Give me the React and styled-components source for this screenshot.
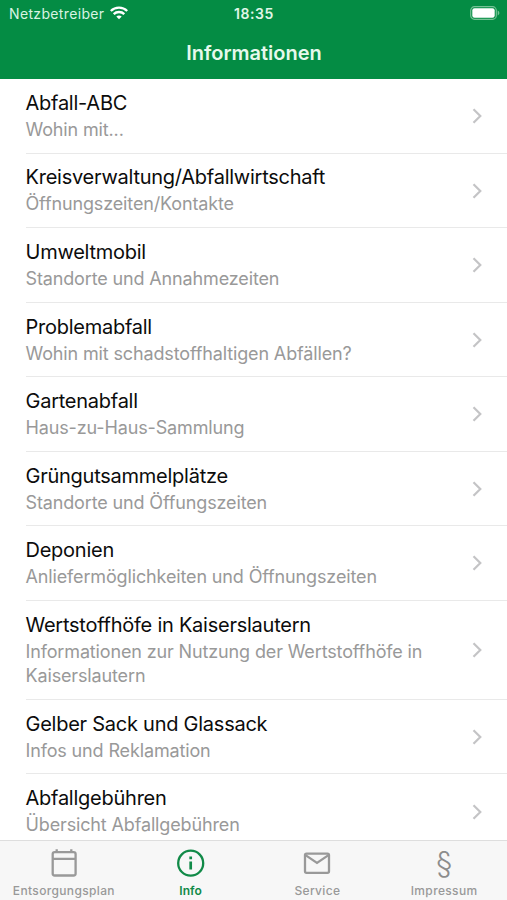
import React from 'react';
import styled, { createGlobalStyle } from 'styled-components';

const GlobalStyle = createGlobalStyle`
    * {
        box-sizing: border-box;
    }

    body {
        margin: 0;
        overflow: hidden;
        font-family: Inter, "Liberation Sans", sans-serif;
        background-color: #fff;
    }
`;

const Screen = styled.div`
    height: 900px;
    display: flex;
    flex-direction: column;
    overflow: hidden;
`;

const Header = styled.header`
    flex: none;
    height: 79px;
    color: #fff;
    background-color: #048c44;
`;

const StatusBar = styled.div`
    height: 27px;
    padding: 0 7px 0 9px;
    display: grid;
    grid-template-columns: 1fr auto 1fr;
    align-items: center;
`;

const Carrier = styled.div`
    display: flex;
    align-items: center;
    gap: 6px;
    font-size: 14px;
    letter-spacing: .35px;
    color: #d9f3e2;

    svg {
        margin-bottom: 1px;
    }
`;

const Clock = styled.div`
    margin-left: -1px;
    font-size: 14px;
    font-weight: 600;
    letter-spacing: .6px;
    color: #e0f6e8;
`;

const Battery = styled.svg`
    justify-self: end;
    margin-bottom: 1px;
`;

const HeaderTitle = styled.h1`
    margin: 0;
    padding-left: 1px;
    text-align: center;
    font-size: 20px;
    line-height: 52px;
    font-weight: 600;
    letter-spacing: 0;
    color: #e6f9ec;
`;

const List = styled.ul`
    flex: 1;
    min-height: 0;
    margin: 0;
    padding: 0 0 0 25.5px;
    list-style: none;
    overflow: hidden;
`;

const ListItem = styled.li`
    display: flex;
    align-items: center;
    justify-content: space-between;
    height: ${props => props.$tall ? '99.05px' : '74.55px'};
    padding: .8px 25px 0 0;
    border-bottom: 1px solid #e9e9e9;
`;

const ItemText = styled.div`
    width: 412px;
    padding-top: 1px;
`;

const ItemTitle = styled.div`
    font-size: 20px;
    line-height: 25px;
    letter-spacing: -.25px;
    color: #0c0c0c;
`;

const ItemSubtitle = styled.div`
    padding-top: 2px;
    font-size: 18px;
    line-height: 24.5px;
    letter-spacing: -.14px;
    color: #999;
`;

const TabBar = styled.nav`
    flex: none;
    height: 60px;
    display: grid;
    grid-template-columns: repeat(4, 1fr);
    border-top: 1px solid #dedede;
    background-color: #f7f7f7;
`;

const Tab = styled.div`
    display: flex;
    flex-direction: column;
    align-items: center;
    padding: 6px 0 0 1px;
    font-size: 12px;
    line-height: 16px;
    font-weight: ${props => props.$active ? 600 : 500};
    letter-spacing: ${props => props.$active ? '.1px' : '.35px'};
    color: ${props => props.$active ? '#118a48' : '#999'};
`;

const TabIcon = styled.svg`
    display: block;
    margin-bottom: 4px;
    fill: none;
    stroke: currentColor;
    stroke-width: 2.3;
`;

const Section = styled.div`
    height: 36px;
    font-size: 30px;
    line-height: 30px;
    font-weight: 300;
    letter-spacing: 0;
    color: #8c8c8c;
`;

const items = [
    { title: 'Abfall-ABC', subtitle: 'Wohin mit...' },
    { title: 'Kreisverwaltung/Abfallwirtschaft', subtitle: 'Öffnungszeiten/Kontakte' },
    { title: 'Umweltmobil', subtitle: 'Standorte und Annahmezeiten' },
    { title: 'Problemabfall', subtitle: 'Wohin mit schadstoffhaltigen Abfällen?' },
    { title: 'Gartenabfall', subtitle: 'Haus-zu-Haus-Sammlung' },
    { title: 'Grüngutsammelplätze', subtitle: 'Standorte und Öffungszeiten' },
    { title: 'Deponien', subtitle: 'Anliefermöglichkeiten und Öffnungszeiten' },
    { title: 'Wertstoffhöfe in Kaiserslautern', subtitle: 'Informationen zur Nutzung der Wertstoffhöfe in Kaiserslautern', tall: true },
    { title: 'Gelber Sack und Glassack', subtitle: 'Infos und Reklamation' },
    { title: 'Abfallgebühren', subtitle: 'Übersicht Abfallgebühren' },
];

const WifiIcon = () => (
    <svg width="18" height="14" viewBox="0 0 18 14" fill="none" stroke="#fff" strokeWidth="2.3">
        <path d="M.8 5C5.3.5 12.7.5 17.2 5" />
        <path d="M3.7 8.1c2.9-2.8 7.7-2.8 10.6 0" />
        <path d="M6.3 10.5c1.5-1.3 3.9-1.3 5.4 0L9 13.2z" fill="#fff" stroke="none" />
    </svg>
);

const BatteryIcon = () => (
    <Battery width="30" height="14" viewBox="0 0 30 14">
        <rect x=".7" y=".7" width="25.6" height="12.6" rx="3.8" fill="none" stroke="#75c295" strokeWidth="1.2" />
        <rect x="2.3" y="2.3" width="22.4" height="9.4" rx="2.2" fill="#fff" />
        <path d="M27.7 4.6c2.2.7 2.2 4.1 0 4.8z" fill="#75c295" />
    </Battery>
);

const Chevron = () => (
    <svg width="10" height="16" viewBox="0 0 10 16" fill="none" stroke="#c4c4c6" strokeWidth="2.2">
        <path d="M1.5 1.2L8.3 8l-6.8 6.8" />
    </svg>
);

const CalendarIcon = () => (
    <TabIcon width="28" height="32" viewBox="0 0 28 32">
        <rect x="2.7" y="5.1" width="22.9" height="23.4" rx="2" />
        <path d="M2.7 11.8h22.9M6.7 2.3V5M21.3 2.3V5" />
    </TabIcon>
);

const InfoIcon = () => (
    <TabIcon width="28" height="32" viewBox="0 0 28 32">
        <circle cx="13.7" cy="16.2" r="12.5" />
        <path d="M13.7 14.6v8M13.7 9.6v2.7" strokeWidth="2.7" />
    </TabIcon>
);

const MailIcon = () => (
    <TabIcon width="28" height="32" viewBox="0 0 28 32">
        <rect x="2" y="6.6" width="24" height="19.2" rx="1.5" />
        <path d="M2.5 8.1L14 15.9l11.5-7.8" />
    </TabIcon>
);

class App extends React.Component {
    render() {
        return (
            <Screen>
                <GlobalStyle />
                <Header>
                    <StatusBar>
                        <Carrier>
                            Netzbetreiber
                            <WifiIcon />
                        </Carrier>
                        <Clock>18:35</Clock>
                        <BatteryIcon />
                    </StatusBar>
                    <HeaderTitle>Informationen</HeaderTitle>
                </Header>
                <List>
                    {items.map(item => (
                        <ListItem key={item.title} $tall={item.tall}>
                            <ItemText>
                                <ItemTitle>{item.title}</ItemTitle>
                                <ItemSubtitle>{item.subtitle}</ItemSubtitle>
                            </ItemText>
                            <Chevron />
                        </ListItem>
                    ))}
                </List>
                <TabBar>
                    <Tab>
                        <CalendarIcon />
                        Entsorgungsplan
                    </Tab>
                    <Tab $active>
                        <InfoIcon />
                        Info
                    </Tab>
                    <Tab>
                        <MailIcon />
                        Service
                    </Tab>
                    <Tab>
                        <Section>§</Section>
                        Impressum
                    </Tab>
                </TabBar>
            </Screen>
        );
    }
}

export default App;
